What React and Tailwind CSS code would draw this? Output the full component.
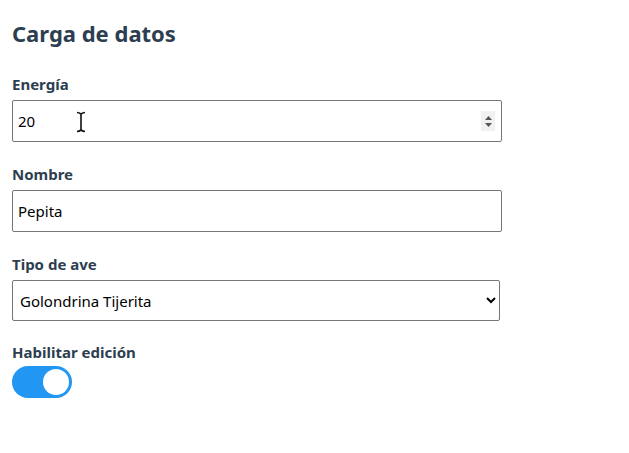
import React, { useState } from 'react';

export default function App() {
  const [energia, setEnergia] = useState(20);
  const [nombre, setNombre] = useState('Pepita');
  const [tipo, setTipo] = useState('Golondrina Tijerita');
  const [edicion, setEdicion] = useState(true);

  return (
    <div className="min-h-screen bg-white px-3 pt-[18px] text-[#2c3e50]" style={{ fontFamily: '"Noto Sans", "Open Sans", sans-serif' }}>
      <h1 className="text-[22px] font-bold leading-[30px] mb-[26px]">Carga de datos</h1>

      <label className="block text-[15px] font-bold leading-5 mb-[6px]">Energía</label>
      <div className="relative w-[490px]">
        <input
          type="number"
          value={energia}
          onChange={(e) => setEnergia(e.target.value)}
          className="w-full h-[42px] border border-[#767676] rounded-[2px] px-[5px] text-[15px] text-black [appearance:textfield] [&::-webkit-inner-spin-button]:appearance-none [&::-webkit-outer-spin-button]:appearance-none"
        />
        {/* spin buttons shown on hover */}
        <div className="absolute left-[469px] top-[11px] w-[14px] h-[20px] bg-[#f1f1f1] flex flex-col items-center justify-center gap-[3px] pointer-events-none">
          <svg width="7" height="4" viewBox="0 0 7 4"><path d="M0 4 L3.5 0 L7 4 Z" fill="#555" /></svg>
          <svg width="7" height="4" viewBox="0 0 7 4"><path d="M0 0 L3.5 4 L7 0 Z" fill="#555" /></svg>
        </div>
        {/* mouse text cursor */}
        <svg className="absolute left-[64px] top-[11px] pointer-events-none" width="10" height="22" viewBox="0 0 10 22">
          <path d="M1 1.5 Q3 1.5 5 3 Q7 1.5 9 1.5 M5 3 V19 M1 20.5 Q3 20.5 5 19 Q7 20.5 9 20.5" stroke="#111" strokeWidth="1.6" fill="none" />
        </svg>
      </div>

      <label className="block text-[15px] font-bold leading-5 mt-[22px] mb-[6px]">Nombre</label>
      <input
        type="text"
        value={nombre}
        onChange={(e) => setNombre(e.target.value)}
        className="block w-[490px] h-[42px] border border-[#767676] rounded-[2px] px-[5px] text-[15px] text-black"
      />

      <label className="block text-[15px] font-bold leading-5 mt-[22px] mb-[6px]">Tipo de ave</label>
      <select
        value={tipo}
        onChange={(e) => setTipo(e.target.value)}
        className="block w-[488px] h-[41px] border border-[#767676] rounded-[2px] px-[3px] text-[15px] text-black bg-white appearance-auto"
      >
        <option>Golondrina Tijerita</option>
        <option>Gorrión</option>
        <option>Hornero</option>
      </select>

      <label className="block text-[15px] font-bold leading-5 mt-[21px] mb-[4px]">Habilitar edición</label>
      <button
        onClick={() => setEdicion(!edicion)}
        className={`relative w-[60px] h-[32px] rounded-full transition-colors ${edicion ? 'bg-[#2196f3]' : 'bg-[#ccc]'}`}
      >
        <span className={`absolute top-[3px] w-[26px] h-[26px] rounded-full bg-white transition-all ${edicion ? 'left-[31px]' : 'left-[3px]'}`} />
      </button>
    </div>
  );
}
